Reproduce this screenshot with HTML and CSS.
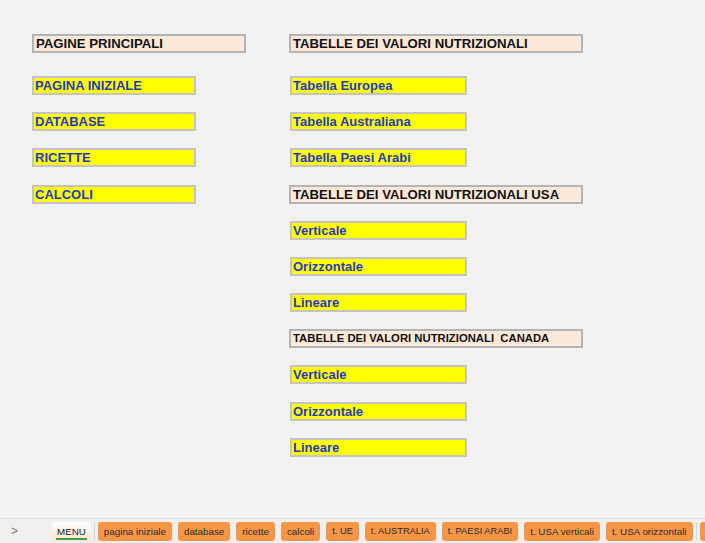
FILE: index.html
```html
<!DOCTYPE html>
<html lang="it">

<head>
  <meta charset="UTF-8">
  <meta name="viewport" content="width=device-width, initial-scale=1.0">
  <title>Menu</title>
  <link rel="stylesheet" href="styles.css">
</head>

<body>

  <div class="sheet">
    <div class="column left">
      <div class="title">PAGINE PRINCIPALI</div>
      <a class="link first" href="#">PAGINA INIZIALE</a>
      <a class="link" href="#">DATABASE</a>
      <a class="link" href="#">RICETTE</a>
      <a class="link" href="#">CALCOLI</a>
    </div>

    <div class="column right">
      <div class="title">TABELLE DEI VALORI NUTRIZIONALI</div>
      <a class="link first" href="#">Tabella Europea</a>
      <a class="link" href="#">Tabella Australiana</a>
      <a class="link" href="#">Tabella Paesi Arabi</a>
      <div class="title">TABELLE DEI VALORI NUTRIZIONALI USA</div>
      <a class="link" href="#">Verticale</a>
      <a class="link" href="#">Orizzontale</a>
      <a class="link" href="#">Lineare</a>
      <div class="title small">TABELLE DEI VALORI NUTRIZIONALI&nbsp; CANADA</div>
      <a class="link" href="#">Verticale</a>
      <a class="link" href="#">Orizzontale</a>
      <a class="link" href="#">Lineare</a>
    </div>
  </div>

  <!-- sheet tabs -->
  <div class="tabbar">
    <span class="arrow">&gt;</span>
    <span class="tab active">MENU</span>
    <span class="sep"></span>
    <span class="tab">pagina iniziale</span>
    <span class="tab">database</span>
    <span class="tab">ricette</span>
    <span class="tab">calcoli</span>
    <span class="tab caps">t. UE</span>
    <span class="tab caps">t. AUSTRALIA</span>
    <span class="tab caps">t. PAESI ARABI</span>
    <span class="tab">t. USA verticali</span>
    <span class="tab">t. USA orizzontali</span>
    <span class="sep"></span>
    <span class="tab more"></span>
  </div>

</body>

</html>
```

FILE: styles.css
```css
* {
  box-sizing: border-box;
}

html,
body {
  height: 100%;
}

body {
  margin: 0;
  background-color: #f2f2f2;
  font-family: 'Liberation Sans', Arial, sans-serif;
  display: flex;
  flex-direction: column;
  overflow: hidden;
}

.sheet {
  flex: 1;
  display: flex;
  gap: 43px;
  padding: 34px 0 0 32px;
}

.column {
  display: flex;
  flex-direction: column;
  gap: 17.2px;
}

.left {
  width: 214px;
}

.right {
  width: 294px;
}

.title {
  height: 19px;
  background-color: #fde9d9;
  border: 2px solid #b4b4b4;
  color: #111;
  font-size: 13.2px;
  font-weight: bold;
  line-height: 15px;
  padding-left: 2px;
  white-space: nowrap;
}

.title.small {
  font-size: 11.3px;
}

.link {
  display: block;
  height: 19px;
  background-color: #ffff00;
  border: 2px solid #c4c4c4;
  color: #1f3bc4;
  font-size: 13px;
  font-weight: bold;
  line-height: 15px;
  padding-left: 1px;
  text-decoration: none;
  white-space: nowrap;
}

.left .link {
  width: 164px;
}

.right .link {
  width: 177px;
  margin-left: 1px;
}

.link.first {
  margin-top: 5.8px;
}

.tabbar {
  height: 25px;
  flex-shrink: 0;
  display: flex;
  align-items: center;
  gap: 6px;
  border-top: 1px solid #e2e2e2;
  background-color: #f0f0f0;
  padding-left: 10px;
  white-space: nowrap;
  overflow: hidden;
  font-size: 9.8px;
}

.arrow {
  flex-shrink: 0;
  width: 36px;
  color: #777;
  font-size: 12px;
  padding-left: 1px;
}

.tab {
  flex-shrink: 0;
  height: 19px;
  line-height: 19px;
  padding: 0 6px;
  border-radius: 3px;
  background-color: #f79646;
  color: #2b2b2b;
}

.tab.caps {
  font-size: 9.3px;
}

.tab.active {
  position: relative;
  background: linear-gradient(#ffffff, #fde3cf);
  color: #222;
  padding: 0 5px;
}

.tab.active::after {
  content: "";
  position: absolute;
  left: 4px;
  right: 4px;
  bottom: 1px;
  height: 2px;
  background-color: #3f9b4c;
}

.sep {
  flex-shrink: 0;
  width: 1px;
  height: 17px;
  margin: 0 -3px;
  background-color: #d4d4d4;
}

.tab.more {
  width: 20px;
}
```
